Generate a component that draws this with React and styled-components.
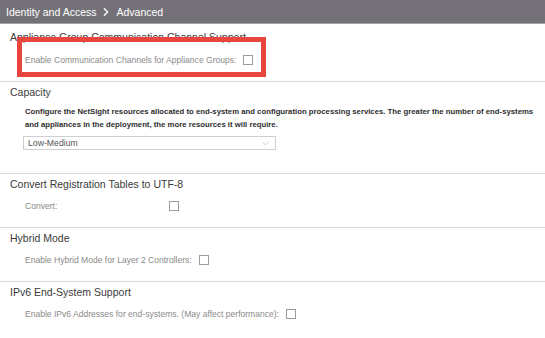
import React from "react";
import styled, { createGlobalStyle } from "styled-components";

const Global = createGlobalStyle`
  html, body { margin: 0; padding: 0; background: #ffffff; }
  body { font-family: "Liberation Sans", Arial, sans-serif; }
`;

const Page = styled.div`
  position: relative;
  width: 545px;
  height: 338px;
  overflow: hidden;
  background: #ffffff;
`;

const Header = styled.header`
  height: 23px;
  background: #747278;
  border-bottom: 1px solid #a3a2a6;
  display: flex;
  align-items: center;
  gap: 6px;
  padding-left: 6px;
  color: #ffffff;
  font-size: 10.5px;
`;

const Crumb = styled.span`
  white-space: nowrap;
`;

const Section = styled.section`
  padding: ${(p) => p.$pt}px 0 ${(p) => p.$pb}px 10px;
  border-bottom: ${(p) => (p.$last ? "none" : "1px solid #dadada")};
`;

const Heading = styled.h2`
  margin: 0;
  font-size: 10.5px;
  font-weight: normal;
  line-height: 14px;
  color: #3a3a3a;
  white-space: nowrap;
`;

const Row = styled.div`
  display: flex;
  align-items: center;
  gap: 7px;
  height: 14px;
  margin-top: ${(p) => p.$mt ?? 8}px;
  padding-left: 15px;
`;

const Label = styled.span`
  font-size: 8.55px;
  color: #8a8a8a;
  white-space: nowrap;
  min-width: ${(p) => p.$minWidth || 0}px;
`;

const Check = styled.span`
  display: inline-block;
  box-sizing: border-box;
  width: 10px;
  height: 10px;
  border: 1px solid #9c9c9c;
  background: #ffffff;
  flex: none;
`;

const Description = styled.p`
  margin: 7px 0 0 15px;
  font-size: 7.75px;
  font-weight: bold;
  line-height: 12.5px;
  color: #2e2e2e;
  white-space: nowrap;
`;

const Select = styled.div`
  box-sizing: border-box;
  margin: 5px 0 0 13px;
  width: 253px;
  height: 14px;
  border: 1px solid #cfcfcf;
  display: flex;
  align-items: center;
  justify-content: space-between;
  padding: 0 6px 0 4px;
  font-size: 8.7px;
  color: #555555;
`;

const Highlight = styled.div`
  position: absolute;
  left: 17px;
  top: 37px;
  width: 249px;
  height: 40px;
  box-sizing: border-box;
  border: 5.5px solid #e8453f;
  pointer-events: none;
`;

const Chevron = ({ dir = "right", size = 7, color = "#fff", sw = 1.6 }) => (
  <svg width={size} height={size} viewBox="0 0 10 10" fill="none">
    {dir === "right" ? (
      <polyline points="3,1 7,5 3,9" stroke={color} strokeWidth={sw} strokeLinecap="round" strokeLinejoin="round" />
    ) : (
      <polyline points="1,3 5,7 9,3" stroke={color} strokeWidth={sw} strokeLinecap="round" strokeLinejoin="round" />
    )}
  </svg>
);

export default function App() {
  return (
    <Page>
      <Global />
      <Header>
        <Crumb>Identity and Access</Crumb>
        <Chevron dir="right" size={8} sw={1.8} />
        <Crumb>Advanced</Crumb>
      </Header>

      <Section $pt={6} $pb={14}>
        <Heading>Appliance Group Communication Channel Support</Heading>
        <Row $mt={9}>
          <Label>Enable Communication Channels for Appliance Groups:</Label>
          <Check />
        </Row>
      </Section>

      <Section $pt={3} $pb={23}>
        <Heading>Capacity</Heading>
        <Description>
          Configure the NetSight resources allocated to end-system and configuration processing services. The greater the number of end-systems
          <br />
          and appliances in the deployment, the more resources it will require.
        </Description>
        <Select>
          <span>Low-Medium</span>
          <Chevron dir="down" size={7} color="#b0b0b0" sw={1} />
        </Select>
      </Section>

      <Section $pt={3} $pb={14}>
        <Heading>Convert Registration Tables to UTF-8</Heading>
        <Row>
          <Label $minWidth={137}>Convert:</Label>
          <Check />
        </Row>
      </Section>

      <Section $pt={3} $pb={14}>
        <Heading>Hybrid Mode</Heading>
        <Row>
          <Label>Enable Hybrid Mode for Layer 2 Controllers:</Label>
          <Check />
        </Row>
      </Section>

      <Section $pt={3} $pb={14} $last>
        <Heading>IPv6 End-System Support</Heading>
        <Row>
          <Label>Enable IPv6 Addresses for end-systems. (May affect performance):</Label>
          <Check />
        </Row>
      </Section>

      <Highlight />
    </Page>
  );
}
